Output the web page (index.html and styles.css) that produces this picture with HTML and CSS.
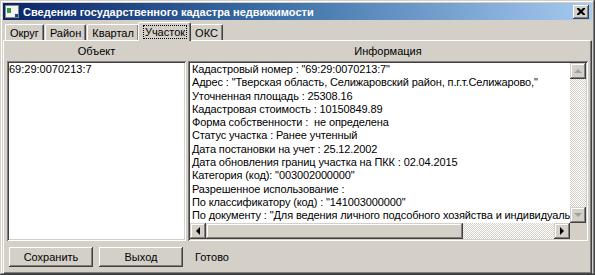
FILE: index.html
```html
<!DOCTYPE html>
<html lang="ru">
<head>
    <meta charset="UTF-8">
    <meta name="viewport" content="width=device-width, initial-scale=1.0">
    <title>Сведения ГКН</title>
    <link rel="stylesheet" href="styles.css">
</head>
<body>
    <div class="window">
        <div class="titlebar">
            <svg class="app-icon" width="14" height="13" viewBox="0 0 14 13">
                <rect x="0.5" y="0.5" width="13" height="12" fill="#f4f4f0" stroke="#8a8a8a"/>
                <rect x="2" y="3" width="4" height="5" fill="#2f9a48"/>
                <rect x="10" y="9" width="3" height="3" fill="#1c3c8c"/>
            </svg>
            <span class="title">Сведения государственного кадастра недвижимости</span>
            <div class="close">
                <svg width="8" height="7" viewBox="0 0 8 7">
                    <path d="M0 0h2l2 2 2-2h2v1l-2.5 2.5L8 6v1H6L4 5 2 7H0V6l2.5-2.5L0 1z" fill="#000"/>
                </svg>
            </div>
        </div>

        <div class="tabs">
            <div class="tab">Округ</div>
            <div class="tab">Район</div>
            <div class="tab">Квартал</div>
            <div class="tab active"><span class="focus">Участок</span></div>
            <div class="tab">ОКС</div>
        </div>

        <div class="panel">
            <div class="columns">
                <div class="col col-object">
                    <div class="col-head">Объект</div>
                    <div class="sunken listbox">
                        <div class="item">69:29:0070213:7</div>
                    </div>
                </div>
                <div class="col col-info">
                    <div class="col-head">Информация</div>
                    <div class="sunken infobox">
                        <div class="info-text">
                            <div>Кадастровый номер : "69:29:0070213:7"</div>
                            <div>Адрес : "Тверская область, Селижаровский район, п.г.т.Селижарово,"</div>
                            <div>Уточненная площадь : 25308.16</div>
                            <div>Кадастровая стоимость : 10150849.89</div>
                            <div>Форма собственности :&nbsp; не определена</div>
                            <div>Статус участка : Ранее учтенный</div>
                            <div>Дата постановки на учет : 25.12.2002</div>
                            <div>Дата обновления границ участка на ПКК : 02.04.2015</div>
                            <div>Категория (код): "003002000000"</div>
                            <div>Разрешенное использование :</div>
                            <div>По классификатору (код) : "141003000000"</div>
                            <div>По документу : "Для ведения личного подсобного хозяйства и индивидуального</div>
                        </div>
                        <div class="vscroll">
                            <div class="sb-btn"><span class="arrow up off"></span></div>
                            <div class="sb-track"></div>
                            <div class="sb-btn"><span class="arrow down off"></span></div>
                        </div>
                        <div class="hscroll">
                            <div class="sb-btn"><span class="arrow left"></span></div>
                            <div class="sb-thumb"></div>
                            <div class="sb-track"></div>
                            <div class="sb-btn"><span class="arrow right"></span></div>
                        </div>
                        <div class="corner"></div>
                    </div>
                </div>
            </div>
            <div class="footer">
                <button class="btn">Сохранить</button>
                <button class="btn">Выход</button>
                <span class="status">Готово</span>
            </div>
        </div>
    </div>
</body>
</html>
```

FILE: styles.css
```css
*
{
    box-sizing: border-box;
    margin: 0;
    padding: 0;
}
body
{
    background: #d4d0c8;
    font-family: "Liberation Sans", Arial, sans-serif;
    font-size: 11px;
    color: #000;
}
.window
{
    width: 595px;
    height: 275px;
    background: #d4d0c8;
    padding: 3px 3px 4px 3px;
    display: flex;
    flex-direction: column;
    box-shadow: inset -1px -1px #404040, inset 1px 1px #d4d0c8, inset -2px -2px #808080, inset 2px 2px #fff;
}
.titlebar
{
    height: 17px;
    flex: none;
    display: flex;
    align-items: center;
    padding: 0 3px 0 2px;
    background: linear-gradient(to right, #0a246a 0%, #3a6ea5 45%, #a6caf0 100%);
}
.app-icon
{
    flex: none;
    margin-right: 4px;
}
.title
{
    flex: 1;
    color: #fff;
    font-weight: bold;
    font-size: 11px;
    white-space: nowrap;
    overflow: hidden;
}
.close
{
    width: 16px;
    height: 14px;
    background: #d4d0c8;
    display: flex;
    align-items: center;
    justify-content: center;
    box-shadow: inset -1px -1px #404040, inset 1px 1px #fff, inset -2px -2px #808080;
}
.tabs
{
    height: 18px;
    flex: none;
    display: flex;
    align-items: flex-end;
    padding-left: 2px;
    margin-top: 2px;
}
.tab
{
    height: 16px;
    padding: 0 4px;
    display: flex;
    align-items: center;
    border-top: 1px solid #fff;
    border-left: 1px solid #fff;
    border-right: 1px solid #404040;
    box-shadow: inset -1px 0 #808080;
    border-radius: 2px 2px 0 0;
    margin-right: 1px;
}
.tab.active
{
    height: 19px;
    margin: 0 -1px -1px -2px;
    padding: 0 4px 0 5px;
    position: relative;
    z-index: 1;
    background: #d4d0c8;
}
.focus
{
    outline: 1px dotted #000;
    padding: 0 1px;
}
.panel
{
    flex: 1;
    display: flex;
    flex-direction: column;
    border-top: 1px solid #fff;
    border-left: 1px solid #fff;
    border-right: 1px solid #404040;
    border-bottom: 1px solid #404040;
    box-shadow: inset -1px -1px #808080;
    padding: 3px 3px 6px 3px;
}
.columns
{
    flex: 1;
    display: flex;
    gap: 2px;
}
.col
{
    display: flex;
    flex-direction: column;
}
.col-object
{
    width: 179px;
}
.col-info
{
    flex: 1;
}
.col-head
{
    height: 17px;
    text-align: center;
    line-height: 14px;
}
.sunken
{
    background: #fff;
    box-shadow: inset 1px 1px #808080, inset -1px -1px #fff, inset 2px 2px #404040, inset -2px -2px #d4d0c8;
    flex: 1;
}
.listbox
{
    padding: 2px 2px;
    line-height: 13px;
}
.infobox
{
    display: grid;
    grid-template-columns: 1fr 16px;
    grid-template-rows: 1fr 16px;
    padding: 2px;
    overflow: hidden;
}
.info-text
{
    padding: 0 2px;
    line-height: 13.3px;
    letter-spacing: -0.12px;
    white-space: nowrap;
    overflow: hidden;
}
.vscroll
{
    display: flex;
    flex-direction: column;
}
.hscroll
{
    display: flex;
}
.sb-btn
{
    width: 16px;
    height: 16px;
    flex: none;
    background: #d4d0c8;
    display: flex;
    align-items: center;
    justify-content: center;
    box-shadow: inset -1px -1px #404040, inset 1px 1px #d4d0c8, inset -2px -2px #808080, inset 2px 2px #fff;
}
.sb-track
{
    flex: 1;
    background: repeating-conic-gradient(#d4d0c8 0 25%, #fff 0 50%) 0 0 / 2px 2px;
}
.sb-thumb
{
    width: 257px;
    background: #d4d0c8;
    box-shadow: inset -1px -1px #404040, inset 1px 1px #d4d0c8, inset -2px -2px #808080, inset 2px 2px #fff;
}
.corner
{
    background: #d4d0c8;
}
.arrow
{
    width: 0;
    height: 0;
    border: 4px solid transparent;
}
.arrow.up
{
    border-top: 0;
    border-bottom-color: #000;
}
.arrow.down
{
    border-bottom: 0;
    border-top-color: #000;
}
.arrow.left
{
    border-left: 0;
    border-right-color: #000;
}
.arrow.right
{
    border-right: 0;
    border-left-color: #000;
}
.arrow.up.off
{
    border-bottom-color: #a0a0a0;
}
.arrow.down.off
{
    border-top-color: #a0a0a0;
}
.footer
{
    height: 26px;
    flex: none;
    display: flex;
    align-items: flex-end;
    gap: 6px;
    padding-left: 2px;
}
.btn
{
    width: 84px;
    height: 20px;
    font: inherit;
    background: #d4d0c8;
    border: none;
    box-shadow: inset -1px -1px #404040, inset 1px 1px #fff, inset -2px -2px #808080;
}
.status
{
    margin-left: 6px;
    line-height: 20px;
}
```
